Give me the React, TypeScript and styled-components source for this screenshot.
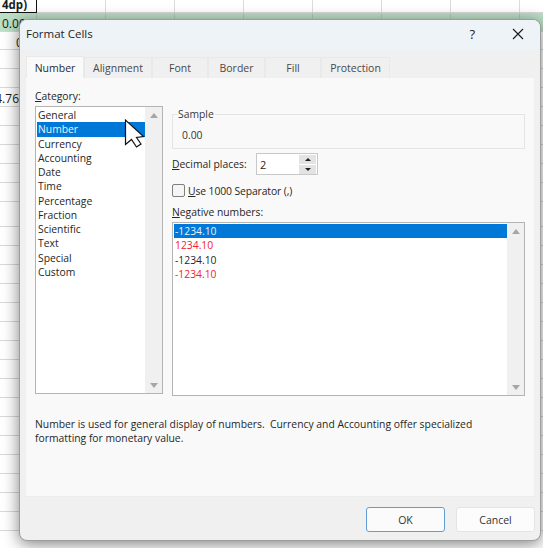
import React from "react";
import styled, { createGlobalStyle } from "styled-components";

const Global = createGlobalStyle`
  html, body { margin: 0; padding: 0; background: #fff; }
  body { width: 543px; height: 548px; overflow: hidden; font-family: "Open Sans", "Noto Sans", sans-serif; }
`;

const Page = styled.div`
  position: relative;
  width: 543px;
  height: 548px;
  overflow: hidden;
`;

const Sheet = styled.div`
  display: grid;
  grid-template-columns: 37px repeat(7, 69px) 24px;
  width: 543px;
`;

const Cell = styled.div<{ $h: number; $green?: boolean; $selected?: boolean; $pad?: number; $right?: number }>`
  box-sizing: border-box;
  height: ${(p) => p.$h}px;
  border-right: 1px solid ${(p) => (p.$selected ? "#111" : p.$green ? "#a9ccb3" : "#dcdcdc")};
  border-bottom: 1px solid ${(p) => (p.$selected ? "#111" : "#d8d8d8")};
  background: ${(p) => (p.$green ? "#bcdfc6" : "#fff")};
  padding-left: ${(p) => p.$pad ?? 0}px;
  padding-right: ${(p) => p.$right ?? 0}px;
  font-family: "Open Sans", sans-serif;
  font-size: 12px;
  line-height: ${(p) => p.$h + 3}px;
  color: #1c1c1c;
  white-space: nowrap;
  overflow: hidden;
  display: flex;
  justify-content: ${(p) => (p.$right ? "flex-end" : "flex-start")};
`;

const HeadText = styled.b`
  font-weight: 700;
  font-size: 11.5px;
  line-height: 10px;
`;

const Dialog = styled.div`
  position: absolute;
  left: 19px;
  top: 19px;
  width: 522px;
  height: 522px;
  box-sizing: border-box;
  border: 1px solid #9a9e9c;
  border-radius: 8px;
  background: #f0f0f0;
  box-shadow: 0 3px 16px rgba(0, 0, 0, 0.5);
  display: flex;
  flex-direction: column;
  overflow: hidden;
  font-family: "Open Sans", "Noto Sans", sans-serif;
  font-size: 10.35px;
  color: #262626;
`;

const TitleBar = styled.div`
  box-sizing: border-box;
  height: 29px;
  flex: none;
  background: #eef3f8;
  display: flex;
  align-items: center;
  padding: 0 16px 2px 6px;
`;

const Title = styled.div`
  flex: 1;
  font-size: 11.5px;
  color: #1f1f1f;
`;

const Help = styled.span`
  font-size: 13px;
  color: #222;
  margin-right: 37px;
`;

const Tabs = styled.div`
  display: flex;
  align-items: flex-end;
  height: 22px;
  margin: 7px 0 0 6px;
  flex: none;
`;

const Tab = styled.div<{ $w: number; $active?: boolean }>`
  box-sizing: border-box;
  width: ${(p) => p.$w}px;
  height: ${(p) => (p.$active ? 22 : 21)}px;
  background: ${(p) => (p.$active ? "#f9f9f9" : "#f0f0f0")};
  border: 1px solid #e9e9e9;
  border-bottom: none;
  display: flex;
  align-items: center;
  justify-content: center;
  color: ${(p) => (p.$active ? "#2a2a2a" : "#484848")};
  font-size: 10.5px;
`;

const Panel = styled.div`
  box-sizing: border-box;
  margin: 0 6px 0 6px;
  height: 419px;
  flex: none;
  background: #f9f9f9;
  border-bottom: 1px solid #ececec;
  padding: 11px 8px 0 9px;
`;

const Columns = styled.div`
  display: grid;
  grid-template-columns: 128px 353px;
  column-gap: 9px;
`;

const Label = styled.div`
  height: 15px;
  line-height: 15px;
  white-space: nowrap;
`;

const CategoryLabel = styled(Label)`
  margin-bottom: 2px;
`;

const ListBox = styled.div<{ $h: number }>`
  box-sizing: border-box;
  height: ${(p) => p.$h}px;
  border: 1px solid #b4b4b4;
  background: #fff;
  display: flex;
  overflow: hidden;
`;

const Items = styled.div`
  flex: 1;
  padding: 1px 0 0 1px;
  min-width: 0;
`;

const Item = styled.div<{ $selected?: boolean; $color?: string }>`
  height: 14.27px;
  line-height: 14.27px;
  padding-left: 1px;
  white-space: nowrap;
  background: ${(p) => (p.$selected ? "#0078d7" : "transparent")};
  color: ${(p) => (p.$selected ? "#e6f2fb" : p.$color ?? "#262626")};
`;

const ScrollBar = styled.div`
  width: 17px;
  flex: none;
  background: #f0f0f0;
  display: flex;
  flex-direction: column;
  justify-content: space-between;
  align-items: center;
  padding: 6px 0 5px;
`;

const Arrow = styled.div<{ $down?: boolean }>`
  width: 0;
  height: 0;
  border-left: 4px solid transparent;
  border-right: 4px solid transparent;
  ${(p) => (p.$down ? "border-top: 5px solid #a6a6a6;" : "border-bottom: 5px solid #a6a6a6;")}
`;

const Right = styled.div`
  display: flex;
  flex-direction: column;
  padding-top: 24px;
`;

const SampleBox = styled.fieldset`
  box-sizing: border-box;
  height: 41px;
  margin: -5px 0 0;
  padding: 0 0 0 9px;
  border: 1px solid #e4e4e4;
  min-width: 0;
`;

const Legend = styled.legend`
  padding: 0;
  margin-left: -4px;
  padding-right: 1px;
  line-height: 13px;
  color: #3a3a3a;
`;

const SampleValue = styled.div`
  line-height: 15px;
  padding-top: 7px;
  color: #333;
`;

const DecimalRow = styled.div`
  display: flex;
  align-items: center;
  margin-top: 4px;
  height: 22px;
`;

const DecimalLabel = styled(Label)`
  width: 84px;
`;

const Spin = styled.div`
  box-sizing: border-box;
  width: 62px;
  height: 22px;
  border: 1px solid #c8c8c8;
  background: #fff;
  display: flex;
  align-items: center;
  padding-left: 3px;
  font-size: 11px;
`;

const SpinValue = styled.div`
  flex: 1;
`;

const SpinButtons = styled.div`
  width: 17px;
  margin-right: 1px;
  display: flex;
  flex-direction: column;
  gap: 1px;
`;

const SpinButton = styled.div`
  height: 9px;
  background: #e3e3e3;
  display: flex;
  align-items: center;
  justify-content: center;
`;

const SpinArrow = styled.div<{ $down?: boolean }>`
  width: 0;
  height: 0;
  border-left: 3px solid transparent;
  border-right: 3px solid transparent;
  ${(p) => (p.$down ? "border-top: 3px solid #222;" : "border-bottom: 3px solid #222;")}
`;

const CheckRow = styled.div`
  display: flex;
  align-items: center;
  gap: 3px;
  margin-top: 8px;
  height: 15px;
`;

const CheckBox = styled.div`
  box-sizing: border-box;
  width: 13px;
  height: 13px;
  border: 1px solid #7f7f7f;
  border-radius: 2px;
  background: #f5f5f5;
`;

const CheckText = styled.span`
  letter-spacing: -0.1px;
`;

const NegativeLabel = styled(Label)`
  margin-top: 7px;
  margin-bottom: 2px;
`;

const Description = styled.div`
  margin-top: 21px;
  line-height: 14px;
  white-space: pre;
`;

const Footer = styled.div`
  display: flex;
  justify-content: flex-end;
  gap: 11px;
  padding: 10px 5px 0 0;
`;

const Button = styled.div<{ $primary?: boolean }>`
  box-sizing: border-box;
  width: 79px;
  height: 25px;
  border: 1px solid ${(p) => (p.$primary ? "#5f9fd6" : "#e4e4e4")};
  border-radius: 3px;
  background: ${(p) => (p.$primary ? "#fbfbfb" : "#fcfcfc")};
  display: flex;
  align-items: center;
  justify-content: center;
  color: #333;
  font-size: 10.5px;
`;

const Cursor = styled.svg`
  position: absolute;
  left: 122px;
  top: 117px;
`;

const rows = [13, 19, 18, 19, 19, 19, 19, 19, 19, 19, 19, 25, 19, 19, 19, 19, 19, 19, 19, 19, 19, 19, 19, 19, 19, 19, 19, 19];
const categories = ["General", "Number", "Currency", "Accounting", "Date", "Time", "Percentage", "Fraction", "Scientific", "Text", "Special", "Custom"];
const negatives = [
  { text: "-1234.10", color: "#262626" },
  { text: "1234.10", color: "#f5202c" },
  { text: "-1234.10", color: "#262626" },
  { text: "-1234.10", color: "#f5202c" },
];

const cellText: Record<number, React.ReactNode> = {
  1: "0.00",
  2: "0.00",
  5: "4.76",
};

export default function App() {
  return (
    <Page>
      <Global />
      <Sheet>
        {rows.map((h, r) =>
          Array.from({ length: 9 }).map((_, c) => {
            if (c > 0) return <Cell key={`${r}-${c}`} $h={h} $green={r === 1} />;
            if (r === 0)
              return (
                <Cell key="head" $h={h} $selected $pad={2}>
                  <HeadText>4dp)</HeadText>
                </Cell>
              );
            return (
              <Cell
                key={`${r}-0`}
                $h={h}
                $green={r === 1}
                $pad={r === 1 ? 2 : r === 2 ? 16 : 0}
                $right={r === 5 ? 17 : 0}
              >
                {cellText[r]}
              </Cell>
            );
          })
        )}
      </Sheet>

      <Dialog>
        <TitleBar>
          <Title>Format Cells</Title>
          <Help>?</Help>
          <svg width="12" height="12" viewBox="0 0 12 12">
            <path d="M1 1 L11 11 M11 1 L1 11" stroke="#1a1a1a" strokeWidth="1.1" fill="none" />
          </svg>
        </TitleBar>

        <Tabs>
          <Tab $w={58} $active>Number</Tab>
          <Tab $w={68}>Alignment</Tab>
          <Tab $w={56}>Font</Tab>
          <Tab $w={57}>Border</Tab>
          <Tab $w={56}>Fill</Tab>
          <Tab $w={69}>Protection</Tab>
        </Tabs>

        <Panel>
          <Columns>
            <div>
              <CategoryLabel><u>C</u>ategory:</CategoryLabel>
              <ListBox $h={288}>
                <Items>
                  {categories.map((name) => (
                    <Item key={name} $selected={name === "Number"}>{name}</Item>
                  ))}
                </Items>
                <ScrollBar>
                  <Arrow />
                  <Arrow $down />
                </ScrollBar>
              </ListBox>
            </div>

            <Right>
              <SampleBox>
                <Legend>Sample</Legend>
                <SampleValue>0.00</SampleValue>
              </SampleBox>
              <DecimalRow>
                <DecimalLabel><u>D</u>ecimal places:</DecimalLabel>
                <Spin>
                  <SpinValue>2</SpinValue>
                  <SpinButtons>
                    <SpinButton><SpinArrow /></SpinButton>
                    <SpinButton><SpinArrow $down /></SpinButton>
                  </SpinButtons>
                </Spin>
              </DecimalRow>
              <CheckRow>
                <CheckBox />
                <CheckText><u>U</u>se 1000 Separator (,)</CheckText>
              </CheckRow>
              <NegativeLabel><u>N</u>egative numbers:</NegativeLabel>
              <ListBox $h={174}>
                <Items>
                  {negatives.map((n, i) => (
                    <Item key={i} $selected={i === 0} $color={n.color}>{n.text}</Item>
                  ))}
                </Items>
                <ScrollBar>
                  <Arrow />
                  <Arrow $down />
                </ScrollBar>
              </ListBox>
            </Right>
          </Columns>
          <Description>
            {"Number is used for general display of numbers.  Currency and Accounting offer specialized\nformatting for monetary value."}
          </Description>
        </Panel>

        <Footer>
          <Button $primary>OK</Button>
          <Button>Cancel</Button>
        </Footer>
      </Dialog>

      <Cursor width="26" height="34" viewBox="0 0 26 34">
        <path
          d="M3.5 3 L3.5 27.5 L9.5 22.5 L14.5 30 L19 27 L14.5 20.5 L21.5 19.5 Z"
          fill="#fff"
          stroke="#111"
          strokeWidth="1.2"
          strokeLinejoin="miter"
        />
      </Cursor>
    </Page>
  );
}
